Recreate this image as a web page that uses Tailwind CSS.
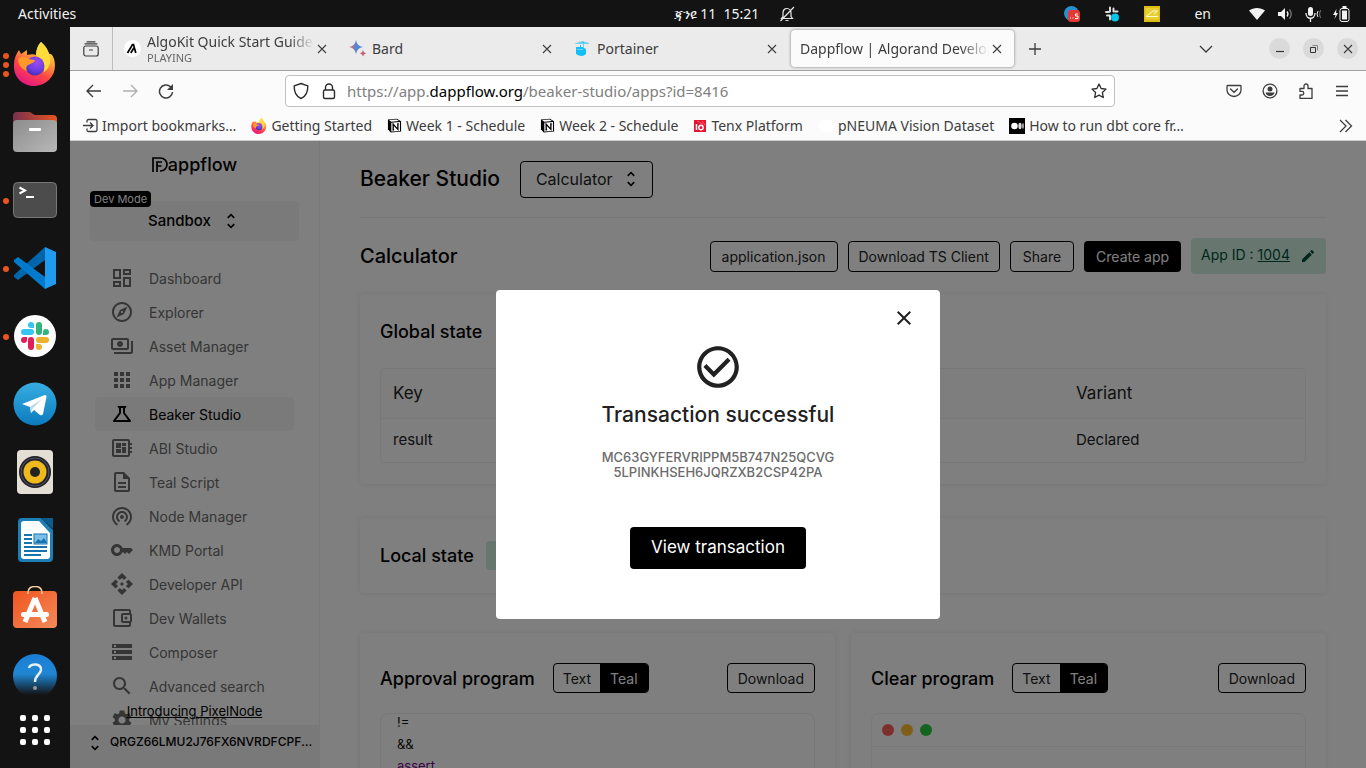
<!DOCTYPE html>
<html lang="en">
<head>
<meta charset="utf-8">
<meta name="viewport" content="width=device-width, initial-scale=1">
<title>Dappflow | Algorand Developer Tools</title>
<script src="https://cdn.jsdelivr.net/npm/@tailwindcss/browser@4"></script>
</head>
<body class="flex h-screen flex-col overflow-hidden bg-[#131313] font-['Noto_Sans',sans-serif] text-[14px] text-[#3d3d3d]">

<!-- Symbols shared by several controls -->
<svg class="absolute size-0" aria-hidden="true">
  <defs>
    <linearGradient id="fxa" x1=".8" y1="0" x2=".3" y2="1"><stop offset="0" stop-color="#fff44f"/><stop offset=".35" stop-color="#ffa436"/><stop offset=".65" stop-color="#ff4545"/><stop offset="1" stop-color="#e31587"/></linearGradient>
    <radialGradient id="fxb" cx=".6" cy=".3" r=".8"><stop offset="0" stop-color="#a04bf0"/><stop offset=".6" stop-color="#6a3be0"/><stop offset="1" stop-color="#3a2a9a"/></radialGradient>
  </defs>
  <symbol id="unfold" viewBox="0 0 24 24"><path d="M12 5.83 15.17 9l1.41-1.41L12 3 7.41 7.59 8.83 9 12 5.83zm0 12.34L8.83 15l-1.41 1.41L12 21l4.59-4.59L15.17 15 12 18.17z"/></symbol>
  <symbol id="x" viewBox="0 0 16 16"><path d="M4 4l8 8M12 4l-8 8" fill="none" stroke="currentColor" stroke-width="1.1"/></symbol>
  <symbol id="notion" viewBox="0 0 16 16"><path d="M1 1.5 10.5.8 15 3.5v11l-11 .9L1 12z" fill="#000"/><path d="M2.2 2.2l8-.6 2.6 1.7-8.2.6z" fill="#fff"/><path d="M4.6 5l9.2-.7v9.5l-9.2.6z" fill="#fff"/><path d="M6.6 12.5V6.7l5 5.4V6.2M5.8 6.7h1.6M10.8 6.2h1.8M5.8 12.5h1.8" fill="none" stroke="#000" stroke-width="1.4"/></symbol>
  <symbol id="fox" viewBox="0 0 44 44">
    <path d="M28 0c5 4 7 8 8 12 2-1 4 2 5 5 4 14-5 26-19 27C9 44 0 35 1 22c0-5 2-10 5-14l2 4 6-4v5c4-1 7-1 9 0 0-5 2-10 5-13z" fill="url(#fxa)"/>
    <path d="M28 0c6 6 10 12 9 21-1 4-3 7-6 9 1-9-4-14-8-17 0-5 2-10 5-13z" fill="#ffdc3c"/>
    <circle cx="22" cy="24" r="9.500" fill="url(#fxb)"/>
    <path d="M5 17c4-3 8-2 11 0 3 1 5 0 6 2-3 3-6 3-8 5-1 1-1 3 0 5-5-2-9-6-9-12z" fill="#ff9a2a"/>
  </symbol>
</svg>

<!-- Desktop top bar -->
<header class="flex h-[27px] shrink-0 items-center justify-between text-[#f2f2f2]">
  <div class="flex-1 pl-[18px]"><button>Activities</button></div>
  <div class="flex items-center gap-5 pl-[101px]">
    <span class="whitespace-pre">ጃንዩ 11  15:21</span>
    <svg class="size-4" viewBox="0 0 16 16" fill="none" stroke="#e8e8e8" stroke-width="1.2"><path d="M2.500 12.500h11L12 10.500V7c0-2.500-1.500-4.500-4-4.500S4 4.500 4 7v3.500zM15 1 1.500 15M6.500 14.500h3"/></svg>
  </div>
  <div class="flex flex-1 items-center justify-end pr-4">
    <svg class="mr-6 size-4" viewBox="0 0 16 16"><circle cx="7.500" cy="7.500" r="7.500" fill="#2a8fd0"/><rect x="4" y="4" width="12" height="12" rx="3" fill="#e53935"/><path d="M6 12h1M8.500 12h1M14 8h-2.500v2H14v2.500h-3" stroke="#fff" fill="none"/></svg>
    <svg class="mr-6 size-4" viewBox="0 0 16 16"><g stroke="#ddd" stroke-width="2" stroke-linecap="round"><path d="M6 1.500v4M9.500 2.500v3M2 6h3M11 5.500h2.500M3 9.500h3M6 9.500v4"/></g><circle cx="11" cy="11.500" r="4" fill="#00c4e8"/></svg>
    <svg class="mr-[34px] size-4" viewBox="0 0 16 16"><rect width="16" height="16" fill="#dcbc10"/><rect x="1.500" y="2" width="13" height="11.500" fill="#e8cf34"/><path d="M2 10.500 9 5h4.500M2 10.500h12M13.500 5 10 8" stroke="#fff9d0" fill="none"/></svg>
    <span class="mr-[38px]">en</span>
    <svg class="mr-3 size-4" viewBox="0 0 16 16" fill="#f2f2f2"><path d="M0 4.500C4.500 1 11.500 1 16 4.500L8 14z"/></svg>
    <svg class="mr-3 size-4" viewBox="0 0 16 16" fill="#f2f2f2"><path d="M1 6h3l4-4v12l-4-4H1z"/><path d="M10 5.500q2 2.500 0 5" fill="none" stroke="#f2f2f2" stroke-width="1.300"/><path d="M12.500 3.500q3.500 4.500 0 9" fill="none" stroke="#777" stroke-width="1.300"/></svg>
    <svg class="mr-3 size-4" viewBox="0 0 16 16" fill="none" stroke="#f2f2f2"><rect x="3" y="1" width="5" height="9" rx="2.500" fill="#f2f2f2" stroke="none"/><path d="M1 7c0 7 9 7 9 0M5.500 12.500V16" stroke-width="1.300"/><path d="M13 5q-2 3 0 6"/><path d="M15.500 4q-2 4 0 8" stroke="#777"/></svg>
    <svg class="h-4 w-[17px]" viewBox="0 0 17 16"><path d="M3.500 3 0 9h2.500L1.500 13 5 7H3z" fill="#f2f2f2"/><rect x="7" y="2.500" width="9" height="13" rx="2" fill="none" stroke="#f2f2f2"/><rect x="9" y="4.500" width="5" height="9" fill="#f2f2f2"/><path d="M9.500 1h4" stroke="#f2f2f2" stroke-width="2"/></svg>
  </div>
</header>

<div class="flex min-h-0 flex-1">

  <!-- Dock -->
  <nav aria-label="Dock" class="flex w-[70px] shrink-0 flex-col">
    <div class="flex min-h-0 flex-1 flex-col gap-6 overflow-hidden pt-[15px]">
      <button aria-label="Firefox" class="relative flex h-11 shrink-0 justify-center"><span class="absolute top-[11px] left-[3px] flex flex-col gap-[3px]"><i class="size-1.5 rounded-full bg-[#e95420]"></i><i class="size-1.5 rounded-full bg-[#e95420]"></i><i class="size-1.5 rounded-full bg-[#e95420]"></i></span><svg class="size-11"><use href="#fox"/></svg></button>
      <button aria-label="Files" class="flex h-11 shrink-0 justify-center"><svg class="size-11" viewBox="0 0 44 44"><defs><linearGradient id="fl"><stop stop-color="#77304f"/><stop offset="1" stop-color="#e95420"/></linearGradient><linearGradient id="fg" x2="1" y2="1"><stop stop-color="#8c8c8c"/><stop offset="1" stop-color="#b8b8b8"/></linearGradient></defs><path d="M0 6q0-4 4-4h12q2 0 4 2l2 1h18q4 0 4 4v12H0z" fill="url(#fl)"/><rect y="10" width="44" height="32" rx="4" fill="url(#fg)"/><rect x="16" y="18" width="12" height="3" rx="1" fill="#fff"/></svg></button>
      <button aria-label="Terminal" class="relative flex h-11 shrink-0 justify-center"><i class="absolute top-5 left-[3px] size-1.5 rounded-full bg-[#e95420]"></i><svg class="size-11" viewBox="0 0 44 44"><rect x=".5" y="4.500" width="43" height="35" rx="4" fill="#4c4c4c" stroke="#777"/><path d="M6.500 9.500 12 12.500l-5.500 3M13 19h8" fill="none" stroke="#fff" stroke-width="2"/></svg></button>
      <button aria-label="Visual Studio Code" class="relative flex h-11 shrink-0 justify-center"><i class="absolute top-5 left-[3px] size-1.5 rounded-full bg-[#e95420]"></i><svg class="size-11" viewBox="0 0 44 44"><path d="M32 1 1 29v2l4 3 27-20z" fill="#0065a9"/><path d="M5 11 1 14v2l31 27V31z" fill="#007acc"/><path d="M32 1l11 5v32l-11 5z" fill="#1f9cf0"/></svg></button>
      <button aria-label="Slack" class="relative flex h-11 shrink-0 justify-center"><i class="absolute top-5 left-[3px] size-1.5 rounded-full bg-[#e95420]"></i><svg class="size-11" viewBox="0 0 44 44"><circle cx="22" cy="22" r="21" fill="#fff"/><g fill="#36c5f0"><rect x="8" y="15" width="13" height="6" rx="3"/><path d="M21 14h-3a3 3 0 1 1 3-3z"/></g><g fill="#2eb67d"><rect x="23" y="8" width="6" height="13" rx="3"/><path d="M30 21v-3a3 3 0 1 1 3 3z"/></g><g fill="#ecb22e"><rect x="23" y="23" width="13" height="6" rx="3"/><path d="M23 30h3a3 3 0 1 1-3 3z"/></g><g fill="#e01e5a"><rect x="15" y="23" width="6" height="13" rx="3"/><path d="M14 23v3a3 3 0 1 1-3-3z"/></g></svg></button>
      <button aria-label="Telegram" class="flex h-11 shrink-0 justify-center"><svg class="size-11" viewBox="0 0 44 44"><defs><linearGradient id="tg" x2="0" y2="1"><stop stop-color="#37aee2"/><stop offset="1" stop-color="#0b7bbd"/></linearGradient></defs><circle cx="22" cy="22" r="21.500" fill="url(#tg)"/><path d="M9 22 32 13q2 0 1.500 2L30 32q-1 2-3 1l-6-5-3 3-1-6z" fill="#fff"/><path d="M17 25 29 17 19 27l-1 4z" fill="#b8d8ea"/></svg></button>
      <button aria-label="Rhythmbox" class="flex h-11 shrink-0 justify-center"><svg class="size-11" viewBox="0 0 44 44"><rect x="4" y="0" width="36" height="44" rx="4" fill="#e4dfd5"/><circle cx="22" cy="22" r="16" fill="#22222c"/><circle cx="22" cy="22" r="14" fill="none" stroke="#55555f"/><circle cx="22" cy="22" r="11.500" fill="#edb91c"/><circle cx="22" cy="22" r="5" fill="#222"/></svg></button>
      <button aria-label="LibreOffice Writer" class="flex h-11 shrink-0 justify-center"><svg class="size-11" viewBox="0 0 44 44"><path d="M5 4q0-4 4-4h19l12 12v28q0 4-4 4H9q-4 0-4-4z" fill="#1c7fb6"/><path d="M28 0h12v11z" fill="#0e5c8c"/><path d="M8 6q0-3 3-3h15l11 12v23q0 3-3 3H11q-3 0-3-3z" fill="#fff"/><path d="M11 17h8M11 21h8M11 25h8M11 29h23M11 33h23M11 37h17" stroke="#1673ae" stroke-width="2"/><rect x="21" y="16" width="13" height="10" fill="#7cc0ea" stroke="#1673ae"/><path d="M22 25l3-4 3 2 3-3 3 5z" fill="#1673ae"/></svg></button>
      <button aria-label="Ubuntu Software" class="flex h-11 shrink-0 justify-center"><svg class="size-11" viewBox="0 0 44 44"><defs><linearGradient id="sw" x2="1" y2="1"><stop stop-color="#f0541e"/><stop offset="1" stop-color="#f58a5a"/></linearGradient></defs><rect y="5" width="44" height="37" rx="4" fill="url(#sw)"/><path d="M15 8V7q0-6.500 7-6.500T29 7v1" fill="none" stroke="#f3d19a" stroke-width="1.500"/><path d="M22 12 12 36M22 12l10 24" stroke="#fff" stroke-width="5" fill="none"/><rect x="8" y="26" width="28" height="5" rx="2.500" fill="#fff"/></svg></button>
      <button aria-label="Help" class="relative flex h-11 shrink-0 justify-center"><svg class="size-11" viewBox="0 0 44 44"><defs><linearGradient id="hp" x2="0" y2="1"><stop stop-color="#1c7fd6"/><stop offset=".45" stop-color="#1f86d4"/><stop offset=".93" stop-color="#131313"/></linearGradient></defs><circle cx="22" cy="22" r="22" fill="url(#hp)"/><path d="M16 14c1-5 13-5 12 2-1 5-6 5-6 12" fill="none" stroke="#e8eef4" stroke-width="2.500"/><circle cx="22" cy="34" r="2" fill="#999"/></svg></button>
    </div>
    <button aria-label="Show applications" class="grid h-[72px] shrink-0 grid-cols-[repeat(3,6px)] place-content-center gap-1.5 pb-1">
      <i class="size-1.5 rounded-xs bg-white"></i><i class="size-1.5 rounded-xs bg-white"></i><i class="size-1.5 rounded-xs bg-white"></i>
      <i class="size-1.5 rounded-xs bg-white"></i><i class="size-1.5 rounded-xs bg-white"></i><i class="size-1.5 rounded-xs bg-white"></i>
      <i class="size-1.5 rounded-xs bg-white"></i><i class="size-1.5 rounded-xs bg-white"></i><i class="size-1.5 rounded-xs bg-white"></i>
    </button>
  </nav>

  <!-- Browser window -->
  <div class="flex min-w-0 flex-1 flex-col bg-[#fbfbfb]">

    <!-- Tab strip -->
    <div class="flex h-11 shrink-0 items-center border-b border-[#a0a0a0] bg-[#ebebeb]">
      <button aria-label="Recent browsing" class="flex h-full w-[43px] shrink-0 items-center justify-center border-r border-[#bdbdbd]"><svg class="size-4" viewBox="0 0 16 16" fill="none" stroke="#3d3d3d" stroke-width="1.200" stroke-linecap="round"><rect x=".8" y="5" width="14.400" height="10" rx="2"/><path d="M2 2.800h12M4 .8h8M6.500 9h3"/></svg></button>
      <div role="tablist" class="flex h-full min-w-0 items-center pl-[3px]">
        <div role="tab" class="flex w-[225px] items-center pl-2">
          <svg class="size-[17px] shrink-0" viewBox="0 0 17 17"><circle cx="8.500" cy="8.500" r="8.500" fill="#fff"/><path d="M3.500 13 8.500 4.500h1L11.800 13M6.800 13 9.800 8" fill="none" stroke="#000" stroke-width="1.700"/></svg>
          <div class="ml-1.5 min-w-0 flex-1 overflow-hidden mask-r-from-85% mask-r-to-100% whitespace-nowrap"><div class="leading-[18px]">AlgoKit Quick Start Guide</div><div class="text-[11px] leading-[13px] text-[#666]">PLAYING</div></div>
          <button aria-label="Close tab" class="mr-[11px]"><svg class="size-4"><use href="#x"/></svg></button>
        </div>
        <div role="tab" class="flex w-[225px] items-center pl-2">
          <svg class="size-[17px] shrink-0" viewBox="0 0 17 17"><defs><linearGradient id="bd"><stop stop-color="#d96570"/><stop offset=".6" stop-color="#4a8ad8"/></linearGradient></defs><path d="M7 0q1 6 7 7-6 1-7 7-1-6-7-7 6-1 7-7z" fill="url(#bd)"/><path d="M14 10q.5 3 3 3.500-2.500.5-3 3-.5-2.500-3-3 2.500-.5 3-3.500z" fill="#c8607a"/></svg>
          <div class="ml-1.5 flex-1">Bard</div>
          <button aria-label="Close tab" class="mr-[11px]"><svg class="size-4"><use href="#x"/></svg></button>
        </div>
        <div role="tab" class="flex w-[225px] items-center pl-2">
          <svg class="size-[17px] shrink-0" viewBox="0 0 17 17"><path d="M1 3.500 8 1l7 2v1H1z" fill="#6fd0f5"/><path d="M2 7h4V5h1v2h2V2h1v6l2 1v5q-4 4-10 0z" fill="#13bef9"/><path d="M9 3h1v5H9zM3 9h6v1H3z" fill="#6fd0f5"/></svg>
          <div class="ml-1.5 flex-1">Portainer</div>
          <button aria-label="Close tab" class="mr-[11px]"><svg class="size-4"><use href="#x"/></svg></button>
        </div>
        <div role="tab" aria-selected="true" class="flex h-[37px] w-[223px] items-center rounded bg-[#fbfbfb] pl-[9px] shadow-[0_0_3px_rgba(0,0,0,0.5)]">
          <div class="min-w-0 flex-1 overflow-hidden mask-r-from-85% mask-r-to-100% whitespace-nowrap">Dappflow | Algorand Developer Tools</div>
          <button aria-label="Close tab" class="mr-[9px]"><svg class="size-4"><use href="#x"/></svg></button>
        </div>
      </div>
      <button aria-label="New tab" class="ml-3"><svg class="size-[18px]" viewBox="0 0 18 18"><path d="M9 3v12M3 9h12" stroke="#3d3d3d" stroke-width="1.300"/></svg></button>
      <button aria-label="List all tabs" class="mr-[55px] ml-auto"><svg class="size-4" viewBox="0 0 16 16"><path d="M2 5l6 6 6-6" fill="none" stroke="#3d3d3d" stroke-width="1.300"/></svg></button>
      <div class="mr-2 flex gap-[13px]">
        <button aria-label="Minimize" class="flex size-[21px] items-center justify-center rounded-full bg-[#dadada]"><svg class="size-4" viewBox="0 0 16 16"><path d="M4 10.500h8" stroke="#333" stroke-width="1.200"/></svg></button>
        <button aria-label="Restore" class="flex size-[21px] items-center justify-center rounded-full bg-[#dadada]"><svg class="size-4" viewBox="0 0 16 16" fill="none" stroke="#333"><path d="M4.500 6.500h5v5h-5z"/><path d="M6.500 4.500h5v5" stroke="#888"/></svg></button>
        <button aria-label="Close window" class="flex size-[21px] items-center justify-center rounded-full bg-[#dadada]"><svg class="size-4"><use href="#x"/></svg></button>
      </div>
    </div>

    <!-- Navigation toolbar -->
    <div class="flex h-10 shrink-0 items-center">
      <div class="flex w-[215px] shrink-0 items-center gap-5 pl-4">
        <button aria-label="Back"><svg class="size-4" viewBox="0 0 16 16" fill="none" stroke="#3d3d3d" stroke-width="1.400"><path d="M15 8H1.500M7 2 1 8l6 6"/></svg></button>
        <button aria-label="Forward" disabled><svg class="size-4" viewBox="0 0 16 16" fill="none" stroke="#b0b0b0" stroke-width="1.400"><path d="M1 8h13.500M9 2l6 6-6 6"/></svg></button>
        <button aria-label="Reload"><svg class="size-4" viewBox="0 0 16 16" fill="none" stroke="#3d3d3d" stroke-width="1.500"><path d="M14.500 9A6.500 6.500 0 1 1 12.500 3.800L14 5.500"/><path d="M15 1v6H9z" fill="#3d3d3d" stroke="none"/></svg></button>
      </div>
      <div class="flex h-8 min-w-0 flex-1 items-center rounded border border-[#bfbfbf] bg-white pl-[7px]">
        <svg class="h-[18px] w-4 shrink-0" viewBox="0 0 16 18" fill="none" stroke="#2b2b2b" stroke-width="1.400"><path d="M8 1.500 14.800 3.800C15 10 13 14.500 8 16.500 3 14.500 1 10 1.200 3.800z" stroke-linejoin="round"/></svg>
        <svg class="ml-3 h-[18px] w-4 shrink-0" viewBox="0 0 16 18" fill="none" stroke="#2b2b2b" stroke-width="1.400"><rect x="2.500" y="8" width="11" height="8.500" rx="1.500"/><path d="M4.500 8V5.500a3.500 3.500 0 0 1 7 0V8"/></svg>
        <div role="textbox" aria-label="Address" contenteditable="true" class="ml-2.5 min-w-0 flex-1 text-[15px] text-[#808080]">https://app.<span class="text-black">dappflow.org</span>/beaker-studio/apps?id=8416</div>
        <button aria-label="Bookmark this page" class="mr-[7px]"><svg class="size-4" viewBox="0 0 16 16"><path d="M8 1l2.100 4.500 4.900.6-3.600 3.400.9 5L8 12.100l-4.300 2.400.9-5L1 6.100l4.900-.6z" fill="none" stroke="#2b2b2b" stroke-width="1.300" stroke-linejoin="round"/></svg></button>
      </div>
      <div class="flex w-[251px] shrink-0 items-center justify-end gap-5 pr-4">
        <button aria-label="Save to Pocket"><svg class="size-4" viewBox="0 0 16 16" fill="none" stroke="#3d3d3d" stroke-width="1.300"><path d="M1.700 2.500h12.600q.7 0 .7.700V7a7 6.500 0 0 1-14 0V3.200q0-.7.700-.7zM4.500 6 8 9.300 11.500 6" stroke-linecap="round"/></svg></button>
        <button aria-label="Account"><svg class="size-4" viewBox="0 0 16 16"><circle cx="8" cy="8" r="6.900" fill="none" stroke="#3d3d3d" stroke-width="1.300"/><circle cx="8" cy="6" r="2.500" fill="#3d3d3d"/><path d="M3.500 9.500h9c-.5 2-2 3.500-4.500 3.500S4 11.500 3.500 9.500z" fill="#3d3d3d"/></svg></button>
        <button aria-label="Extensions"><svg class="size-4" viewBox="0 0 16 16" fill="none" stroke="#3d3d3d" stroke-width="1.300" stroke-linejoin="round"><path d="M2 5.500h4V3a2 2 0 0 1 4 0v2.500h4v10H2V12h2a1.800 1.800 0 0 0 0-3.600H2z"/></svg></button>
        <button aria-label="Menu"><svg class="size-4" viewBox="0 0 16 16"><path d="M2 3.500h12M2 8h12M2 12.500h12" stroke="#3d3d3d" stroke-width="1.300"/></svg></button>
      </div>
    </div>

    <!-- Bookmarks -->
    <div class="flex h-[30px] shrink-0 items-center gap-[15px] border-b border-[#cccccc] pl-[13px] whitespace-nowrap">
      <a href="#" class="flex items-center gap-1"><svg class="size-[15px]" viewBox="0 0 15 15" fill="none" stroke="#3d3d3d" stroke-width="1.300"><path d="M4 4.500V3a1.500 1.500 0 0 1 1.500-1.500h7A1.500 1.500 0 0 1 14 3v9a1.500 1.500 0 0 1-1.500 1.500h-7A1.500 1.500 0 0 1 4 12v-1.500M0 7.500h9.500M7 4.500l3 3-3 3"/></svg>Import bookmarks…</a>
      <a href="#" class="flex items-center gap-1"><svg class="size-4"><use href="#fox"/></svg>Getting Started</a>
      <a href="#" class="flex items-center gap-1"><svg class="size-[15px]"><use href="#notion"/></svg>Week 1 - Schedule</a>
      <a href="#" class="flex items-center gap-1"><svg class="size-[15px]"><use href="#notion"/></svg>Week 2 - Schedule</a>
      <a href="#" class="flex items-center gap-1"><svg class="size-3.5" viewBox="0 0 14 14"><rect x="1" y="1" width="12" height="12" fill="#e8132f"/><path d="M3.500 5v6" stroke="#fff" stroke-width="1.500"/><circle cx="8" cy="8.500" r="2.200" fill="none" stroke="#fff" stroke-width="1.400"/><path d="M4 2l6 3M9 2l3 4" stroke="#f89" stroke-width=".6"/></svg>Tenx Platform</a>
      <a href="#" class="flex items-center gap-1"><i class="h-3 w-4 rounded-full bg-white"></i>pNEUMA Vision Dataset</a>
      <a href="#" class="flex items-center gap-1"><svg class="size-4" viewBox="0 0 16 16"><rect width="16" height="16" fill="#000"/><circle cx="5.500" cy="8" r="3.300" fill="#fff"/><ellipse cx="11" cy="8" rx="1.600" ry="3.200" fill="#ddd"/><ellipse cx="14" cy="8" rx=".8" ry="3" fill="#ccc"/></svg>How to run dbt core fr…</a>
      <button aria-label="More bookmarks" class="mr-3 ml-auto"><svg class="size-4" viewBox="0 0 16 16" fill="none" stroke="#3d3d3d" stroke-width="1.300"><path d="M2 2l6 6-6 6M7.500 2l6 6-6 6"/></svg></button>
    </div>

    <!-- Dappflow page -->
    <div class="relative flex min-h-0 flex-1 overflow-hidden bg-white font-[Inter,sans-serif] text-black">

      <aside class="relative flex w-[250px] shrink-0 flex-col border-r border-[#f0f0f0]">
        <div class="flex h-[47px] items-center justify-center text-[18px] leading-6 font-medium"><svg class="h-[15px] w-4" viewBox="0 0 16 15" fill="none" stroke="#000" stroke-width="1.700"><path d="M1 15V1h7.500a6.300 6.300 0 0 1 0 13H8"/><path d="M5 15V5h5M5 9h4.500"/></svg>appflow</div>
        <div class="relative mx-5 mt-[13px]">
          <label class="flex h-10 items-center justify-center gap-2.5 rounded bg-[#f4f4f4] text-[15px] font-medium">
            <select aria-label="Network" class="appearance-none"><option>Sandbox</option></select>
            <svg class="size-5"><use href="#unfold"/></svg>
          </label>
          <span class="absolute -top-2.5 left-0 rounded-sm bg-black px-1 text-[11px] leading-4 text-white">Dev Mode</span>
        </div>
        <nav aria-label="Main" class="mt-5 flex min-h-0 flex-1 flex-col overflow-hidden px-[25px] text-[14px] text-[#6b6b6b]">
          <a href="#" class="flex h-[34px] shrink-0 items-center gap-[15px] pl-[15px]"><svg class="size-6" viewBox="0 0 24 24" fill="currentColor"><path d="M19 5v2h-4V5h4M9 5v6H5V5h4m10 8v6h-4v-6h4M9 17v2H5v-2h4M21 3h-8v6h8V3zM11 3H3v10h8V3zm10 8h-8v10h8V11zm-10 4H3v6h8v-6z"/></svg>Dashboard</a>
          <a href="#" class="flex h-[34px] shrink-0 items-center gap-[15px] pl-[15px]"><svg class="size-6" viewBox="0 0 24 24" fill="currentColor"><path d="M12 2C6.480 2 2 6.480 2 12s4.480 10 10 10 10-4.480 10-10S17.520 2 12 2zm0 18c-4.410 0-8-3.590-8-8s3.590-8 8-8 8 3.590 8 8-3.590 8-8 8zm-5.500-2.500 7.510-3.490L17.500 6.500 9.990 9.990 6.500 17.500zm5.500-6.600c.61 0 1.100.49 1.100 1.100s-.49 1.100-1.100 1.100-1.100-.49-1.100-1.100.49-1.100 1.100-1.100z"/></svg>Explorer</a>
          <a href="#" class="flex h-[34px] shrink-0 items-center gap-[15px] pl-[15px]"><svg class="size-6" viewBox="0 0 24 24" fill="currentColor"><path d="M19 14V6c0-1.100-.9-2-2-2H3c-1.100 0-2 .9-2 2v8c0 1.100.9 2 2 2h14c1.100 0 2-.9 2-2zm-2 0H3V6h14v8zm-7-7c-1.660 0-3 1.340-3 3s1.340 3 3 3 3-1.340 3-3-1.340-3-3-3zm13 0v11c0 1.100-.9 2-2 2H4v-2h17V7h2z"/></svg>Asset Manager</a>
          <a href="#" class="flex h-[34px] shrink-0 items-center gap-[15px] pl-[15px]"><svg class="size-6" viewBox="0 0 24 24" fill="currentColor"><path d="M4 8h4V4H4v4zm6 12h4v-4h-4v4zm-6 0h4v-4H4v4zm0-6h4v-4H4v4zm6 0h4v-4h-4v4zm6-10v4h4V4h-4zm-6 4h4V4h-4v4zm6 6h4v-4h-4v4zm0 6h4v-4h-4v4z"/></svg>App Manager</a>
          <a href="#" aria-current="page" class="flex h-[34px] shrink-0 items-center gap-[15px] rounded bg-[#f4f4f4] pl-[15px] text-black"><svg class="size-6" viewBox="0 0 24 24" fill="currentColor"><path d="M13 11.330 18 18H6l5-6.670V6h2m2.960-2H8.040c-.42 0-.65.48-.39.810L9 6.500v4.170L3.200 18.400c-.49.660-.02 1.600.8 1.600h16c.82 0 1.290-.94.8-1.600L15 10.670V6.500l1.350-1.690c.26-.33.03-.81-.39-.81z"/></svg>Beaker Studio</a>
          <a href="#" class="flex h-[34px] shrink-0 items-center gap-[15px] pl-[15px]"><svg class="size-6" viewBox="0 0 24 24" fill="currentColor"><path d="M22 9V7h-2V5c0-1.100-.9-2-2-2H4c-1.100 0-2 .9-2 2v14c0 1.100.9 2 2 2h14c1.100 0 2-.9 2-2v-2h2v-2h-2v-2h2v-2h-2V9h2zm-4 10H4V5h14v14zM6 13h5v4H6zm6-6h4v3h-4zM6 7h5v5H6zm6 4h4v6h-4z"/></svg>ABI Studio</a>
          <a href="#" class="flex h-[34px] shrink-0 items-center gap-[15px] pl-[15px]"><svg class="size-6" viewBox="0 0 24 24" fill="currentColor"><path d="M8 16h8v2H8zm0-4h8v2H8zm6-10H6c-1.100 0-2 .9-2 2v16c0 1.100.89 2 1.990 2H18c1.100 0 2-.9 2-2V8l-6-6zm4 18H6V4h7v5h5v11z"/></svg>Teal Script</a>
          <a href="#" class="flex h-[34px] shrink-0 items-center gap-[15px] pl-[15px]"><svg class="size-6" viewBox="0 0 24 24" fill="currentColor"><path d="M12 11c-1.100 0-2 .9-2 2s.9 2 2 2 2-.9 2-2-.9-2-2-2zm6 2c0-3.310-2.690-6-6-6s-6 2.690-6 6c0 2.220 1.210 4.150 3 5.190l1-1.740c-1.190-.7-2-1.970-2-3.450 0-2.210 1.790-4 4-4s4 1.790 4 4c0 1.480-.81 2.750-2 3.450l1 1.740c1.790-1.040 3-2.970 3-5.190zM12 3C6.480 3 2 7.480 2 13c0 3.700 2.010 6.920 4.990 8.650l1-1.730C5.610 18.530 4 15.960 4 13c0-4.420 3.580-8 8-8s8 3.580 8 8c0 2.960-1.610 5.530-4 6.920l1 1.730c2.990-1.730 5-4.950 5-8.650 0-5.520-4.480-10-10-10z"/></svg>Node Manager</a>
          <a href="#" class="flex h-[34px] shrink-0 items-center gap-[15px] pl-[15px]"><svg class="size-6" viewBox="0 0 24 24" fill="currentColor"><path fill-rule="evenodd" d="M12.650 10C11.830 7.670 9.610 6 7 6c-3.310 0-6 2.690-6 6s2.690 6 6 6c2.610 0 4.830-1.670 5.650-4H13l2 2 2-2 2 2 4-4-2-2zM7 15c-1.650 0-3-1.350-3-3s1.350-3 3-3 3 1.350 3 3-1.350 3-3 3z"/></svg>KMD Portal</a>
          <a href="#" class="flex h-[34px] shrink-0 items-center gap-[15px] pl-[15px]"><svg class="size-6" viewBox="0 0 24 24" fill="currentColor"><path d="m14 12-2 2-2-2 2-2 2 2zm-2-6 2.120 2.120 2.500-2.500L12 1 7.380 5.620l2.500 2.500L12 6zm-6 6 2.120-2.120-2.500-2.500L1 12l4.620 4.620 2.500-2.500L6 12zm12 0-2.120 2.120 2.500 2.500L23 12l-4.620-4.620-2.500 2.500L18 12zm-6 6-2.120-2.120-2.500 2.500L12 23l4.620-4.620-2.500-2.500L12 18z"/></svg>Developer API</a>
          <a href="#" class="flex h-[34px] shrink-0 items-center gap-[15px] pl-[15px]"><svg class="size-6" viewBox="0 0 24 24" fill="currentColor"><path d="M21 7.280V5c0-1.100-.9-2-2-2H5c-1.110 0-2 .9-2 2v14c0 1.100.89 2 2 2h14c1.100 0 2-.9 2-2v-2.280c.59-.35 1-.98 1-1.720V9c0-.74-.41-1.380-1-1.720zM20 9v6h-7V9h7zM5 19V5h14v2h-6c-1.100 0-2 .9-2 2v6c0 1.100.9 2 2 2h6v2H5z"/><circle cx="16" cy="12" r="1.500"/></svg>Dev Wallets</a>
          <a href="#" class="flex h-[34px] shrink-0 items-center gap-[15px] pl-[15px]"><svg class="size-6" viewBox="0 0 24 24" fill="currentColor"><path d="M2 20h20v-4H2v4zm2-3h2v2H4v-2zM2 4v4h20V4H2zm4 3H4V5h2v2zm-4 7h20v-4H2v4zm2-3h2v2H4v-2z"/></svg>Composer</a>
          <a href="#" class="flex h-[34px] shrink-0 items-center gap-[15px] pl-[15px]"><svg class="size-6" viewBox="0 0 24 24" fill="currentColor"><path d="M15.500 14h-.79l-.28-.27C15.410 12.590 16 11.110 16 9.500 16 5.910 13.090 3 9.500 3S3 5.910 3 9.500 5.910 16 9.500 16c1.610 0 3.090-.59 4.230-1.570l.27.28v.79l5 4.990L20.490 19l-4.990-5zm-6 0C7.010 14 5 11.990 5 9.500S7.010 5 9.500 5 14 7.010 14 9.500 11.990 14 9.500 14z"/></svg>Advanced search</a>
          <a href="#" class="flex h-[34px] shrink-0 items-center gap-[15px] pl-[15px]"><svg class="size-6" viewBox="0 0 24 24" fill="currentColor"><path d="M19.140 12.940c.04-.3.060-.61.060-.94 0-.32-.02-.64-.07-.94l2.030-1.580c.18-.14.230-.41.120-.61l-1.920-3.320c-.12-.22-.37-.29-.59-.22l-2.390.96c-.5-.38-1.030-.7-1.620-.94l-.36-2.540c-.04-.24-.24-.41-.48-.41h-3.840c-.24 0-.43.17-.47.41l-.36 2.540c-.59.24-1.130.57-1.620.94l-2.390-.96c-.22-.08-.47 0-.59.22L2.740 8.870c-.12.21-.08.47.12.61l2.030 1.580c-.05.3-.09.63-.09.94s.02.64.07.94l-2.030 1.580c-.18.14-.23.41-.12.61l1.920 3.320c.12.22.37.29.59.22l2.390-.96c.5.38 1.030.7 1.620.94l.36 2.540c.05.24.24.41.48.41h3.840c.24 0 .44-.17.47-.41l.36-2.540c.59-.24 1.130-.56 1.620-.94l2.390.96c.22.08.47 0 .59-.22l1.920-3.320c.12-.22.07-.47-.12-.61l-2.010-1.580zM12 15.600c-1.980 0-3.600-1.620-3.600-3.600s1.620-3.600 3.600-3.600 3.600 1.620 3.600 3.600-1.620 3.600-3.600 3.600z"/></svg>My Settings</a>
        </nav>
        <button class="flex h-[43px] shrink-0 items-start gap-[5px] bg-[#f2f2f2] pt-2 pr-1 pl-[15px] text-[12px] font-medium">
          <svg class="size-5 shrink-0"><use href="#unfold"/></svg>
          <span class="min-w-0 flex-1 truncate text-left leading-[18px]">QRGZ66LMU2J76FX6NVRDFCPFTWKSNVVJ</span>
        </button>
        <a href="#" class="absolute bottom-12 left-0 w-full text-center text-[13px] leading-[18px] underline">Introducing PixelNode</a>
      </aside>

      <main class="min-w-0 flex-1 px-10">
        <div class="flex h-[77px] items-center gap-5 border-b border-[#f0f0f0]">
          <h1 class="text-[21px] font-medium">Beaker Studio</h1>
          <label class="flex h-[37px] items-center gap-2 rounded border border-black px-[11px] pl-[15px] text-[16px] text-[#222]">
            <select aria-label="App" class="appearance-none"><option>Calculator</option></select>
            <svg class="size-5 text-black"><use href="#unfold"/></svg>
          </label>
        </div>

        <div class="mt-5 flex items-center justify-between">
          <h2 class="text-[20px] font-medium">Calculator</h2>
          <div class="flex items-center gap-2.5 text-[14px]">
            <button class="h-[31px] rounded-sm border border-black px-[11px] text-[#222]">application.json</button>
            <button class="h-[31px] rounded-sm border border-black px-2.5 text-[#222]">Download TS Client</button>
            <button class="h-[31px] rounded-sm border border-black px-3 text-[#222]">Share</button>
            <button class="h-[31px] rounded-sm bg-black px-3 text-white">Create app</button>
            <div class="flex h-9 items-center rounded-sm bg-[#ceefdf] px-2.5 text-[#004d3a]"><span class="pb-1">App ID : <a href="#" class="underline">1004</a></span><button aria-label="Edit app ID" class="ml-2.5"><svg class="size-4" viewBox="0 0 24 24" fill="currentColor"><path d="M3 17.250V21h3.750L17.810 9.940l-3.750-3.750L3 17.250zM20.710 7.040c.39-.39.39-1.020 0-1.410l-2.340-2.340c-.39-.39-1.020-.39-1.410 0l-1.830 1.830 3.750 3.750 1.830-1.830z"/></svg></button></div>
          </div>
        </div>

        <section class="mt-5 rounded px-5 pt-6 pb-[21px] shadow-[0_0_7px_rgba(0,0,0,0.09)]">
          <h3 class="text-[18px] leading-7 font-medium">Global state</h3>
          <div class="mt-[22px] overflow-hidden rounded border border-[#f0f0f0]">
            <table class="w-full text-left text-[#222]">
              <thead><tr class="h-[49px] border-b border-[#f0f0f0] bg-[#fcfcfc]"><th class="pl-3 text-[17px] font-normal">Key</th><th class="w-[241px] pl-3 text-[17px] font-normal">Variant</th></tr></thead>
              <tbody><tr class="h-11"><td class="pl-3 text-[15px]">result</td><td class="pl-3 text-[15px]">Declared</td></tr></tbody>
            </table>
          </div>
        </section>

        <section class="mt-[34px] flex h-[75px] items-center rounded px-5 shadow-[0_0_7px_rgba(0,0,0,0.09)]">
          <h3 class="text-[18px] font-medium">Local state</h3>
          <span class="ml-3 h-[29px] w-40 rounded-sm bg-[#ceefdf]"></span>
        </section>

        <div class="mt-10 grid grid-cols-2 gap-4">
          <section class="h-60 rounded p-5 pt-[30px] shadow-[0_0_7px_rgba(0,0,0,0.09)]">
            <div class="flex items-center">
              <h3 class="text-[18px] font-medium">Approval program</h3>
              <div class="ml-[18px] flex h-[30px] overflow-hidden rounded-sm border border-black text-[14px]"><button aria-pressed="false" class="px-[9px] text-[#222]">Text</button><button aria-pressed="true" class="bg-black px-2.5 text-white">Teal</button></div>
              <button class="ml-auto h-[30px] rounded-sm border border-black px-2.5 text-[14px] text-[#222]">Download</button>
            </div>
            <div class="mt-5 h-40 overflow-hidden rounded-lg border border-[#f0f0f0] pl-4"><pre class="-mt-[3px] font-[Inter,sans-serif] text-[13px] leading-[22px] text-[#111]">!=
&amp;&amp;
<span class="text-[#770088]">assert</span></pre></div>
          </section>
          <section class="h-60 rounded p-5 pt-[30px] shadow-[0_0_7px_rgba(0,0,0,0.09)]">
            <div class="flex items-center">
              <h3 class="text-[18px] font-medium">Clear program</h3>
              <div class="ml-[18px] flex h-[30px] overflow-hidden rounded-sm border border-black text-[14px]"><button aria-pressed="false" class="px-[9px] text-[#222]">Text</button><button aria-pressed="true" class="bg-black px-2.5 text-white">Teal</button></div>
              <button class="ml-auto h-[30px] rounded-sm border border-black px-2.5 text-[14px] text-[#222]">Download</button>
            </div>
            <div class="mt-5 h-40 overflow-hidden rounded-lg border border-[#f0f0f0]">
              <div class="flex h-[33px] items-center gap-[7px] border-b border-[#f0f0f0] pl-2.5"><i class="size-3 rounded-full bg-[#ff5f56]"></i><i class="size-3 rounded-full bg-[#ffbd2e]"></i><i class="size-3 rounded-full bg-[#27c93f]"></i></div>
            </div>
          </section>
        </div>
      </main>

      <!-- Transaction result dialog -->
      <div class="absolute inset-0 flex items-center justify-center bg-black/50">
        <div role="dialog" aria-modal="true" aria-labelledby="dialog-title" class="relative flex w-[444px] flex-col items-center rounded bg-white pt-[52px] pb-[50px] text-[#212121]">
          <button aria-label="Close" class="absolute top-4 right-6"><svg class="size-6" viewBox="0 0 24 24" fill="currentColor"><path d="M19 6.410 17.590 5 12 10.590 6.410 5 5 6.410 10.590 12 5 17.590 6.410 19 12 13.410 17.590 19 19 17.590 13.410 12z"/></svg></button>
          <svg class="size-[50px]" viewBox="0 0 24 24" fill="currentColor"><path d="M16.590 7.580 10 14.170l-3.590-3.580L5 12l5 5 8-8zM12 2C6.480 2 2 6.480 2 12s4.480 10 10 10 10-4.480 10-10S17.520 2 12 2zm0 18c-4.420 0-8-3.580-8-8s3.580-8 8-8 8 3.580 8 8-3.580 8-8 8z"/></svg>
          <h2 id="dialog-title" class="mt-2 text-[21px] leading-[30px] font-medium">Transaction successful</h2>
          <p class="mt-5 text-center text-[13px] leading-[15px] font-medium text-[#6b6b6b]">MC63GYFERVRIPPM5B747N25QCVG<br>5LPINKHSEH6JQRZXB2CSP42PA</p>
          <button class="mt-[47px] h-[42px] rounded bg-black px-[21px] text-[17px] text-white">View transaction</button>
        </div>
      </div>
    </div>
  </div>
</div>
</body>
</html>
